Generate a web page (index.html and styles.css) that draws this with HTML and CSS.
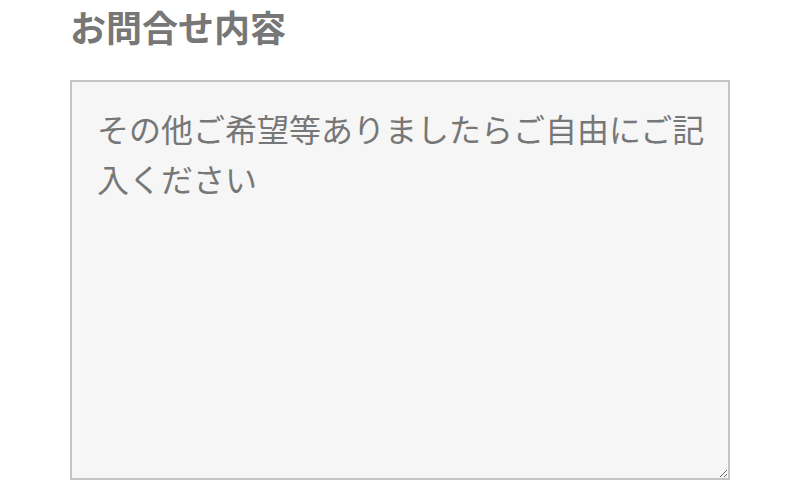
FILE: index.html
```html
<!DOCTYPE html>
<html lang="ja">
<head>
<meta charset="utf-8">
<link rel="stylesheet" href="styles.css">
</head>
<body>
<div class="form">
  <h2 class="label">お問合せ内容</h2>
  <textarea class="message" placeholder="その他ご希望等ありましたらご自由にご記入ください"></textarea>
</div>
</body>
</html>
```
FILE: styles.css
```css
html, body {
  margin: 0;
  padding: 0;
  background: #ffffff;
}
.form {
  padding: 6px 0 0 70px;
  font-family: "Noto Sans CJK JP", "Noto Sans", sans-serif;
}
.label {
  margin: 0 0 34px 0;
  font-size: 36px;
  line-height: 40px;
  font-weight: 700;
  color: #777777;
}
.message {
  display: block;
  box-sizing: border-box;
  width: 660px;
  height: 400px;
  margin: 0;
  padding: 21px 20px 21px 25px;
  border: 2px solid #c4c4c4;
  background: #f6f6f6;
  font-family: "Noto Sans CJK JP", "Noto Sans", sans-serif;
  font-size: 32px;
  line-height: 50px;
  color: #555555;
  resize: both;
  outline: none;
}
.message::placeholder {
  color: #777777;
  opacity: 1;
}
```
